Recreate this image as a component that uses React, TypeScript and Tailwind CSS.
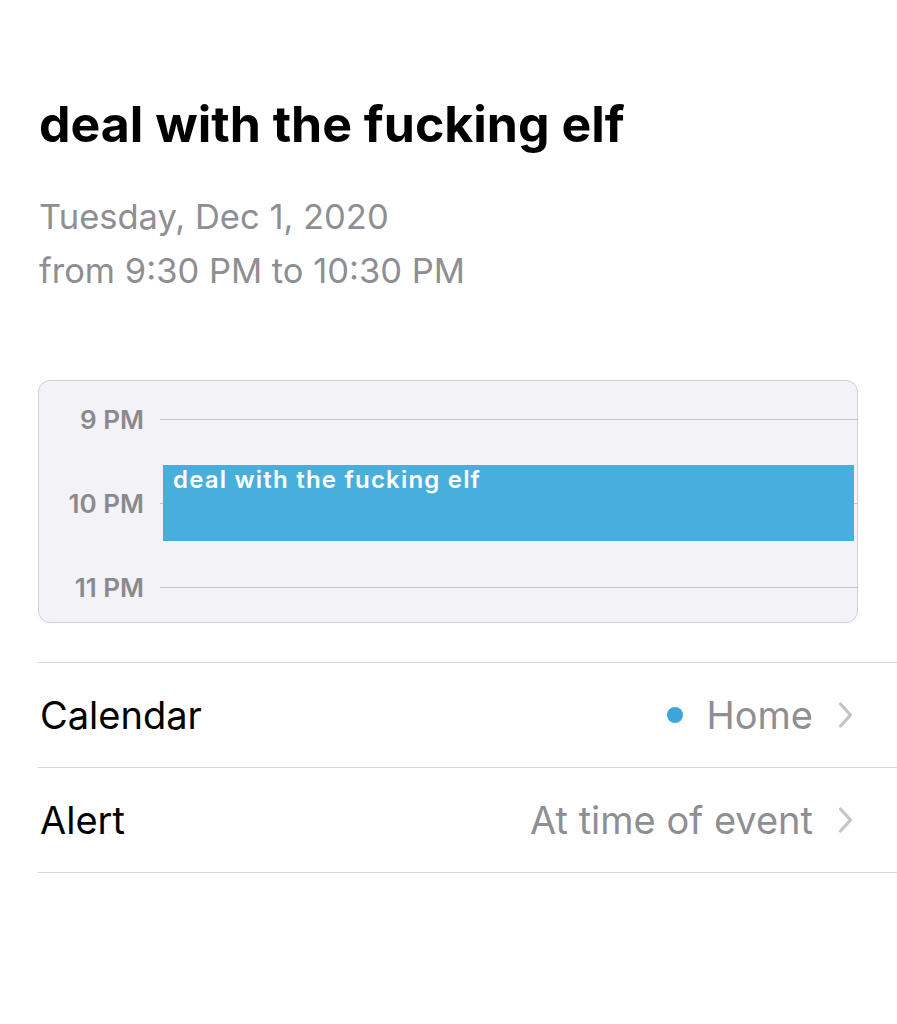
import React from 'react';

const hours = ['9 PM', '10 PM', '11 PM'];

const Chevron = () => (
    <svg width="17" height="28" viewBox="0 0 17 28" fill="none" className="shrink-0">
        <path d="M3.5 3 L13.5 14 L3.5 25" stroke="#c4c4c7" strokeWidth="3.2" strokeLinecap="round" strokeLinejoin="round" />
    </svg>
);

// Fila de ajustes (Calendar / Alert)
const DetailRow = ({ label, value, dot }: { label: string; value: string; dot?: boolean }) => (
    <div className="flex items-center h-[105px] border-b border-[#d8d8dc] pl-[2px] pr-[43px]">
        <span className="text-[38px] text-black">{label}</span>
        <div className="ml-auto flex items-center">
            {dot && <span className="w-[16px] h-[16px] rounded-full bg-[#3aa7dc] mr-[24px]" />}
            <span className="text-[38px] text-[#8e8e93] mr-[24px]">{value}</span>
            <Chevron />
        </div>
    </div>
);

function App() {
    return (
        <div className="bg-white min-h-screen pl-[38px] pt-[95px]" style={{ fontFamily: 'Inter, "Noto Sans", sans-serif' }}>
            <h1 className="text-[50px] leading-[58px] font-bold text-black pl-[1px]">deal with the fucking elf</h1>

            <div className="mt-[37px] text-[34.5px] leading-[54px] text-[#8e8e93] pl-[1px]">
                <p>Tuesday, Dec 1, 2020</p>
                <p>from 9:30 PM to 10:30 PM</p>
            </div>

            <div className="relative mt-[82px] mr-[39px] h-[243px] rounded-[12px] border border-[#cfcfd4] bg-[#f2f2f7] pt-[24px] flex flex-col gap-[55px]">
                {hours.map(h => (
                    <div key={h} className="flex items-center h-[29px]">
                        <span className="w-[105px] text-right text-[26px] font-semibold text-[#8a8a8e]">{h}</span>
                        <div className="ml-[16px] flex-1 h-[1.5px] bg-[#c2c2c6]" />
                    </div>
                ))}
                <div className="absolute left-[124px] right-[3px] top-[84px] h-[76px] bg-[#48afdd] pl-[10px]">
                    <span className="text-[24px] leading-[30px] font-semibold tracking-[1.2px] text-white">deal with the fucking elf</span>
                </div>
            </div>

            <div className="mt-[39px] border-t border-[#d8d8dc]">
                <DetailRow label="Calendar" value="Home" dot />
                <DetailRow label="Alert" value="At time of event" />
            </div>
        </div>
    );
}

export default App;
